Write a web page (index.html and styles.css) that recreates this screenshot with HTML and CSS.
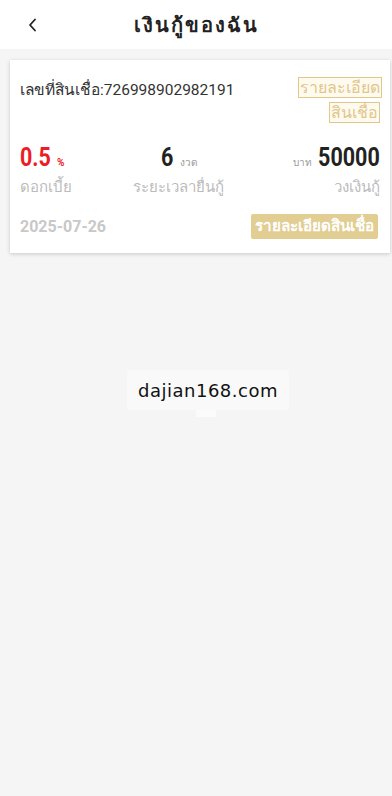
FILE: index.html
```html
<!DOCTYPE html>
<html lang="th">
<head>
<meta charset="utf-8">
<meta name="viewport" content="width=device-width, initial-scale=1">
<link rel="stylesheet" href="styles.css">
</head>
<body>
<header class="topbar">
  <span class="back">
    <svg width="12" height="14" viewBox="0 0 12 14"><path d="M8 1.5 L3 7 L8 12.5" fill="none" stroke="#222" stroke-width="1.8" stroke-linecap="round" stroke-linejoin="round"/></svg>
  </span>
  <h1 class="title">เงินกู้ของฉัน</h1>
</header>
<main class="content">
  <section class="card">
    <div class="row-top">
      <div class="loan-no">เลขที่สินเชื่อ:726998902982191</div>
      <div class="outline-link"><span>รายละเอียดสินเชื่อ</span></div>
    </div>
    <div class="stats">
      <div class="stat left">
        <div class="value"><span class="num red n-left">0.5</span><span class="unit red">%</span></div>
        <div class="label">ดอกเบี้ย</div>
      </div>
      <div class="stat center">
        <div class="value"><span class="num">6</span><span class="unit">งวด</span></div>
        <div class="label">ระยะเวลายื่นกู้</div>
      </div>
      <div class="stat right">
        <div class="value"><span class="unit pre">บาท</span><span class="num n-right">50000</span></div>
        <div class="label">วงเงินกู้</div>
      </div>
    </div>
    <div class="row-bottom">
      <div class="date">2025-07-26</div>
      <button class="detail-btn">รายละเอียดสินเชื่อ</button>
    </div>
  </section>
  <div class="watermark">dajian168.com</div>
  <div class="wm-tab"></div>
</main>
</body>
</html>
```
FILE: styles.css
```css
* { box-sizing: border-box; }
html, body { margin: 0; padding: 0; }
body {
  background: #f5f5f5;
  font-family: Roboto, "Noto Sans", "DejaVu Sans", sans-serif;
  color: #333;
  min-height: 796px;
}
.topbar {
  height: 49px;
  background: #fff;
  display: flex;
  align-items: center;
  justify-content: center;
  position: relative;
}
.back {
  position: absolute;
  left: 27px;
  top: 18px;
  display: flex;
}
.title {
  margin: 0;
  font-size: 20px;
  font-weight: bold;
  letter-spacing: 2px;
  color: #222;
}
.content {
  padding: 11px 2px 0 10px;
}
.card {
  background: #fff;
  box-shadow: 0 1px 4px rgba(0,0,0,0.18);
  padding: 15px 10px 14px 10px;
}
.row-top {
  display: flex;
  justify-content: space-between;
  align-items: flex-start;
}
.loan-no {
  font-size: 15.5px;
  color: #333;
  padding-top: 2px;
}
.outline-link {
  width: 82px;
  text-align: right;
  font-size: 16px;
  line-height: 25px;
}
.outline-link span {
  color: #e0c78a;
  background: #fffaf0;
  border: 1px solid #e0c78a;
  padding: 0 1px;
  -webkit-box-decoration-break: clone;
  box-decoration-break: clone;
}
.stats {
  display: grid;
  grid-template-columns: 100px 117px 1fr;
  margin-top: 18px;
}
.stat { display: flex; flex-direction: column; }
.stat.left { align-items: flex-start; }
.stat.center { align-items: center; }
.stat.right { align-items: flex-end; }
.value { display: flex; align-items: baseline; height: 30px; }
.num {
  display: inline-block;
  font-size: 25px;
  font-weight: bold;
  color: #222;
  transform: scaleX(0.86);
}
.num.red { color: #ee1c25; }
.n-left { transform-origin: left center; margin-right: -5px; }
.n-right { transform-origin: right center; margin-left: -10px; }
.unit {
  font-size: 10px;
  color: #999;
  margin-left: 6px;
}
.unit.red { color: #ee1c25; font-weight: bold; }
.unit.pre { margin-left: 0; margin-right: 6px; }
.label {
  font-size: 15px;
  color: #bbb;
  margin-top: 2px;
}
.row-bottom {
  display: flex;
  justify-content: space-between;
  align-items: center;
  margin-top: 15px;
}
.date {
  font-size: 16px;
  font-weight: bold;
  color: #c8c8c8;
}
.detail-btn {
  border: none;
  background: #e2cd93;
  color: #fff;
  font-family: inherit;
  font-size: 15.3px;
  font-weight: bold;
  border-radius: 2px;
  padding: 2px 4px;
  line-height: 21px;
  margin-right: 2px;
}
.watermark {
  width: 162px;
  margin: 117px 0 0 117px;
  background: #f9f9f9;
  text-align: center;
  font-family: "DejaVu Sans", sans-serif;
  font-size: 18px;
  letter-spacing: 0.5px;
  color: #111;
  padding: 10px 0 9px;
}
.wm-tab {
  width: 20px;
  height: 7px;
  margin-left: 186px;
  background: #fbfbfb;
}
```
